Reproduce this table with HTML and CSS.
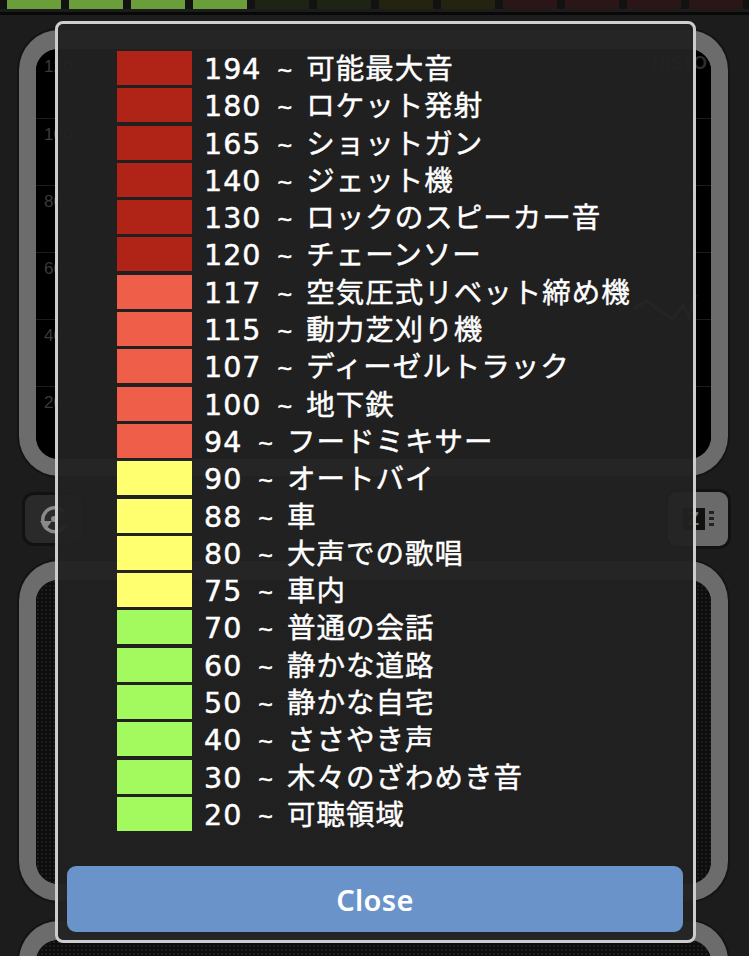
FILE: index.html
```html
<!DOCTYPE html>
<html lang="ja">
<head>
<meta charset="utf-8">
<title>dB Levels</title>
<link rel="stylesheet" href="styles.css">
</head>
<body>
<div class="screen">
  <div class="meter">
    <span class="seg on"></span><span class="seg on"></span><span class="seg on"></span><span class="seg on"></span>
    <span class="seg g-off"></span><span class="seg g-off"></span>
    <span class="seg y-off"></span><span class="seg y-off"></span>
    <span class="seg r-off"></span><span class="seg r-off"></span><span class="seg r-off"></span><span class="seg r-off"></span>
  </div>
  <div class="rule"></div>

  <div class="app">
    <section class="frame frame-top">
      <div class="inner chart">
        <div class="histo">HISTO</div>
        <div class="axis">
          <div class="tick"><span>120</span></div>
          <div class="tick"><span>100</span></div>
          <div class="tick"><span>80</span></div>
          <div class="tick"><span>60</span></div>
          <div class="tick"><span>40</span></div>
          <div class="tick"><span>20</span></div>
        </div>
        <svg class="trace" viewBox="0 0 80 40" width="80" height="40"><polyline points="0,20 14,12 28,22 40,30 50,16 56,28 62,6" fill="none" stroke="#5a5a5a" stroke-width="3"/></svg>
      </div>
    </section>

    <div class="controls">
      <div class="btn reset">
        <svg viewBox="0 0 40 40" width="40" height="40"><path d="M30 13 A12 12 0 1 0 31 27" fill="none" stroke="#8a8a8a" stroke-width="3.5"/><path d="M6 22 L12 30 L18 22 Z" fill="#8a8a8a"/><circle cx="20" cy="20" r="3" fill="#8a8a8a"/></svg>
      </div>
      <div class="btn zbtn">
        <div class="zbox">Z</div>
        <div class="zdots"><i></i><i></i><i></i></div>
      </div>
    </div>

    <section class="frame frame-mid">
      <div class="inner dots"></div>
    </section>

    <section class="frame frame-low">
      <div class="inner dots"></div>
    </section>
  </div>

  <div class="modal">
    <ul class="levels">
      <li class="row"><span class="sw c-red"></span><span class="lbl">194 <span class="tl">~</span> 可能最大音</span></li>
      <li class="row"><span class="sw c-red"></span><span class="lbl">180 <span class="tl">~</span> ロケット発射</span></li>
      <li class="row"><span class="sw c-red"></span><span class="lbl">165 <span class="tl">~</span> ショットガン</span></li>
      <li class="row"><span class="sw c-red"></span><span class="lbl">140 <span class="tl">~</span> ジェット機</span></li>
      <li class="row"><span class="sw c-red"></span><span class="lbl">130 <span class="tl">~</span> ロックのスピーカー音</span></li>
      <li class="row"><span class="sw c-red"></span><span class="lbl">120 <span class="tl">~</span> チェーンソー</span></li>
      <li class="row"><span class="sw c-salmon"></span><span class="lbl">117 <span class="tl">~</span> 空気圧式リベット締め機</span></li>
      <li class="row"><span class="sw c-salmon"></span><span class="lbl">115 <span class="tl">~</span> 動力芝刈り機</span></li>
      <li class="row"><span class="sw c-salmon"></span><span class="lbl">107 <span class="tl">~</span> ディーゼルトラック</span></li>
      <li class="row"><span class="sw c-salmon"></span><span class="lbl">100 <span class="tl">~</span> 地下鉄</span></li>
      <li class="row"><span class="sw c-salmon"></span><span class="lbl">94 <span class="tl">~</span> フードミキサー</span></li>
      <li class="row"><span class="sw c-yellow"></span><span class="lbl">90 <span class="tl">~</span> オートバイ</span></li>
      <li class="row"><span class="sw c-yellow"></span><span class="lbl">88 <span class="tl">~</span> 車</span></li>
      <li class="row"><span class="sw c-yellow"></span><span class="lbl">80 <span class="tl">~</span> 大声での歌唱</span></li>
      <li class="row"><span class="sw c-yellow"></span><span class="lbl">75 <span class="tl">~</span> 車内</span></li>
      <li class="row"><span class="sw c-green"></span><span class="lbl">70 <span class="tl">~</span> 普通の会話</span></li>
      <li class="row"><span class="sw c-green"></span><span class="lbl">60 <span class="tl">~</span> 静かな道路</span></li>
      <li class="row"><span class="sw c-green"></span><span class="lbl">50 <span class="tl">~</span> 静かな自宅</span></li>
      <li class="row"><span class="sw c-green"></span><span class="lbl">40 <span class="tl">~</span> ささやき声</span></li>
      <li class="row"><span class="sw c-green"></span><span class="lbl">30 <span class="tl">~</span> 木々のざわめき音</span></li>
      <li class="row"><span class="sw c-green"></span><span class="lbl">20 <span class="tl">~</span> 可聴領域</span></li>
    </ul>
    <button class="close">Close</button>
  </div>
</div>
</body>
</html>
```

FILE: styles.css
```css
html, body {
  margin: 0;
  padding: 0;
  background: #1b1b1b;
}

.screen {
  position: relative;
  width: 749px;
  height: 956px;
  overflow: hidden;
  background: #1c1c1c;
  font-family: "DejaVu Sans", "Noto Sans CJK JP", sans-serif;
}

/* top level meter */
.meter {
  display: flex;
  gap: 8px;
  padding-left: 7px;
  height: 9px;
  background: #121212;
}
.seg {
  width: 54px;
  height: 9px;
  flex: none;
}
.seg.on { background: #6a9e3b; }
.seg.g-off { background: #1d2414; }
.seg.y-off { background: #23230f; }
.seg.r-off { background: #2a1616; }

.rule {
  height: 3px;
  margin-top: 3px;
  background: #080808;
}

/* background app */
.app {
  display: flex;
  flex-direction: column;
  padding: 15px 21px 0 19px;
}

.frame {
  border: 17px solid #6c6c6c;
  border-top-width: 19px;
  border-radius: 40px;
  background: #000;
  box-shadow: 0 0 0 2px #141414;
}
.inner {
  height: 100%;
  border-radius: 22px;
  background: #000;
}
.frame-top { height: 410px; }
.frame-mid { height: 304px; margin-top: 0; }
.frame-low { height: 80px; margin-top: 20px; }

.chart {
  position: relative;
}
.histo {
  position: absolute;
  right: 4px;
  top: 4px;
  font-family: "Liberation Sans", sans-serif;
  font-weight: bold;
  font-size: 18px;
  color: #2e2e2e;
}
.axis {
  display: flex;
  flex-direction: column;
  padding-top: 2px;
}
.tick {
  height: 67px;
  border-top: 1px solid #1c1c1c;
  font-family: "Liberation Sans", sans-serif;
  font-size: 17px;
  color: #3a3a3a;
  padding-left: 8px;
  padding-top: 6px;
  box-sizing: border-box;
}
.tick:first-child { border-top: none; }
.trace {
  position: absolute;
  right: -2px;
  top: 240px;
}

.dots {
  background-color: #0d0d0d;
  background-image: radial-gradient(#1e1e1e 1px, transparent 1.2px);
  background-size: 4px 4px;
}

.controls {
  display: flex;
  justify-content: space-between;
  align-items: center;
  height: 85px;
  padding: 0 0 0 6px;
}
.btn {
  width: 58px;
  height: 48px;
  border-radius: 9px;
  background: #2a2a2a;
  box-shadow: 0 0 0 3px #121212;
  display: flex;
  align-items: center;
  justify-content: center;
}
.zbtn {
  width: 60px;
  height: 54px;
  background: #6a6a6a;
  gap: 4px;
}
.zbox {
  width: 22px;
  height: 22px;
  background: #111;
  color: #777;
  font-family: "Liberation Sans", sans-serif;
  font-weight: bold;
  font-size: 18px;
  line-height: 22px;
  text-align: center;
}
.zdots {
  display: flex;
  flex-direction: column;
  gap: 3px;
}
.zdots i {
  width: 5px;
  height: 3px;
  background: #222;
}

/* modal */
.modal {
  position: absolute;
  left: 55px;
  top: 21px;
  width: 641px;
  height: 922px;
  box-sizing: border-box;
  border: 3px solid #cdcdcd;
  border-radius: 8px;
  background: rgba(34, 34, 34, 0.95);
  display: flex;
  flex-direction: column;
  padding: 27px 0 8px;
}

.levels {
  list-style: none;
  margin: 0;
  padding: 0 0 0 59px;
  display: flex;
  flex-direction: column;
  gap: 3.3px;
}
.row {
  display: flex;
  align-items: center;
  gap: 12px;
  height: 34px;
}
.sw {
  width: 75px;
  height: 34px;
  flex: none;
}
.c-red { background: #b02418; }
.c-salmon { background: #ee5e48; }
.c-yellow { background: #ffff6f; }
.c-green { background: #a2fa5f; }

.lbl {
  color: #fff;
  font-size: 28.5px;
  line-height: 34px;
  margin-top: 4px;
  letter-spacing: 1px;
  white-space: nowrap;
  -webkit-text-stroke: 0.45px #fff;
}
.tl {
  font-family: "Liberation Sans", sans-serif;
  font-size: 25px;
  margin: 0 3px 0 6px;
}

.close {
  margin: auto 10px 0 9px;
  height: 66px;
  border: none;
  border-radius: 9px;
  background: #6a94c9;
  color: #fff;
  font-family: "Noto Sans", sans-serif;
  font-weight: 600;
  font-size: 29px;
  letter-spacing: 0.3px;
}
```
